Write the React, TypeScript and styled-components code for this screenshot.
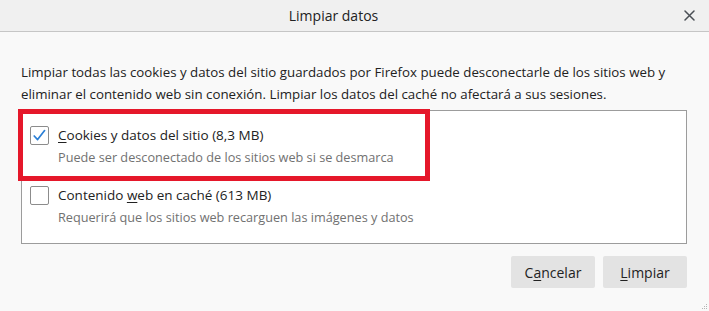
import React from "react";
import styled, { createGlobalStyle } from "styled-components";

const GlobalStyle = createGlobalStyle`
  html, body { margin: 0; padding: 0; background: #f9f9f9; }
  * { box-sizing: border-box; }
`;

const Dialog = styled.div`
  position: relative;
  width: 709px;
  height: 311px;
  display: flex;
  flex-direction: column;
  background: #f9f9f9;
  font-family: "Open Sans", "Noto Sans", sans-serif;
  color: #222;
  overflow: hidden;
`;

const TitleBar = styled.div`
  height: 32px;
  flex: none;
  display: grid;
  grid-template-columns: 1fr auto 1fr;
  align-items: center;
  background: #f0f0f0;
  border-bottom: 1px solid #c6c6c6;
`;

const Title = styled.div`
  grid-column: 2;
  font-size: 14px;
  color: #222;
  margin-right: 42px;
`;

const CloseButton = styled.button`
  grid-column: 3;
  justify-self: end;
  width: 36px;
  height: 31px;
  margin-right: 2px;
  border: none;
  background: transparent;
  padding: 0;
  display: flex;
  align-items: center;
  justify-content: center;
`;

const Content = styled.div`
  flex: 1;
  display: flex;
  flex-direction: column;
  padding: 29px 22px 0 21px;
`;

const Description = styled.p`
  margin: 0;
  font-size: 13.3px;
  line-height: 22px;
  color: #222;
`;

const ListBox = styled.div`
  position: relative;
  margin-top: 5px;
  height: 134px;
  background: #fff;
  border: 1px solid #9c9c9c;
  padding: 13px 8px 0 8px;
  display: flex;
  flex-direction: column;
  gap: 16px;
`;

const Item = styled.div`
  display: grid;
  grid-template-columns: 18px 1fr;
  column-gap: 10px;
  align-items: start;
`;

const Box = styled.span<{ $checked?: boolean }>`
  width: 19px;
  height: 19px;
  margin-top: 2px;
  border: 1px solid #8c8c8c;
  border-radius: 2px;
  background: #fff;
  display: flex;
  align-items: center;
  justify-content: center;
`;

const ItemText = styled.div`
  display: flex;
  flex-direction: column;
`;

const Label = styled.div`
  font-size: 13.5px;
  line-height: 22px;
  color: #222;
`;

const Hint = styled.div`
  font-size: 12.7px;
  line-height: 22px;
  color: #717171;
`;

const Key = styled.span`
  text-decoration: underline;
  text-underline-offset: 2px;
`;

const Highlight = styled.div`
  position: absolute;
  left: -4px;
  top: -2px;
  width: 412px;
  height: 72px;
  border: 5px solid #e5172a;
  pointer-events: none;
`;

const Footer = styled.div`
  display: flex;
  justify-content: flex-end;
  gap: 8px;
  margin-top: 12px;
`;

const Button = styled.button`
  width: 84px;
  height: 32px;
  border: none;
  border-radius: 2px;
  background: #e3e3e3;
  font-family: inherit;
  font-size: 14px;
  color: #222;
  padding: 0;
`;

const Grip = styled.svg`
  position: absolute;
  right: 1px;
  bottom: 1px;
`;

const Check = () => (
  <svg width="15" height="15" viewBox="0 0 15 15">
    <path d="M2.2 8 L5.6 11.6 L12.6 2.6" fill="none" stroke="#2b7fd6" strokeWidth="1.7" strokeLinecap="round" strokeLinejoin="round" />
  </svg>
);

export default function App() {
  return (
    <>
      <GlobalStyle />
      <Dialog>
        <TitleBar>
          <Title>Limpiar datos</Title>
          <CloseButton aria-label="Cerrar">
            <svg width="11" height="11" viewBox="0 0 11 11">
              <path d="M1 1 L10 10 M10 1 L1 10" stroke="#4a4f55" strokeWidth="1.5" strokeLinecap="round" />
            </svg>
          </CloseButton>
        </TitleBar>
        <Content>
          <Description>
            Limpiar todas las cookies y datos del sitio guardados por Firefox puede desconectarle de los sitios web y
            eliminar el contenido web sin conexión. Limpiar los datos del caché no afectará a sus sesiones.
          </Description>
          <ListBox>
            <Item>
              <Box $checked>
                <Check />
              </Box>
              <ItemText>
                <Label>
                  <Key>C</Key>ookies y datos del sitio (8,3 MB)
                </Label>
                <Hint>Puede ser desconectado de los sitios web si se desmarca</Hint>
              </ItemText>
            </Item>
            <Item>
              <Box />
              <ItemText>
                <Label>
                  Contenido <Key>w</Key>eb en caché (613 MB)
                </Label>
                <Hint>Requerirá que los sitios web recarguen las imágenes y datos</Hint>
              </ItemText>
            </Item>
            <Highlight />
          </ListBox>
          <Footer>
            <Button>
              C<Key>a</Key>ncelar
            </Button>
            <Button>
              <Key>L</Key>impiar
            </Button>
          </Footer>
        </Content>
        <Grip width="7" height="7" viewBox="0 0 7 7">
          <rect x="5" y="1" width="1" height="1" fill="#b5b5b5" />
          <rect x="3" y="3" width="1" height="1" fill="#b5b5b5" />
          <rect x="5" y="3" width="1" height="1" fill="#b5b5b5" />
          <rect x="1" y="5" width="1" height="1" fill="#b5b5b5" />
          <rect x="3" y="5" width="1" height="1" fill="#b5b5b5" />
          <rect x="5" y="5" width="1" height="1" fill="#b5b5b5" />
        </Grip>
      </Dialog>
    </>
  );
}
